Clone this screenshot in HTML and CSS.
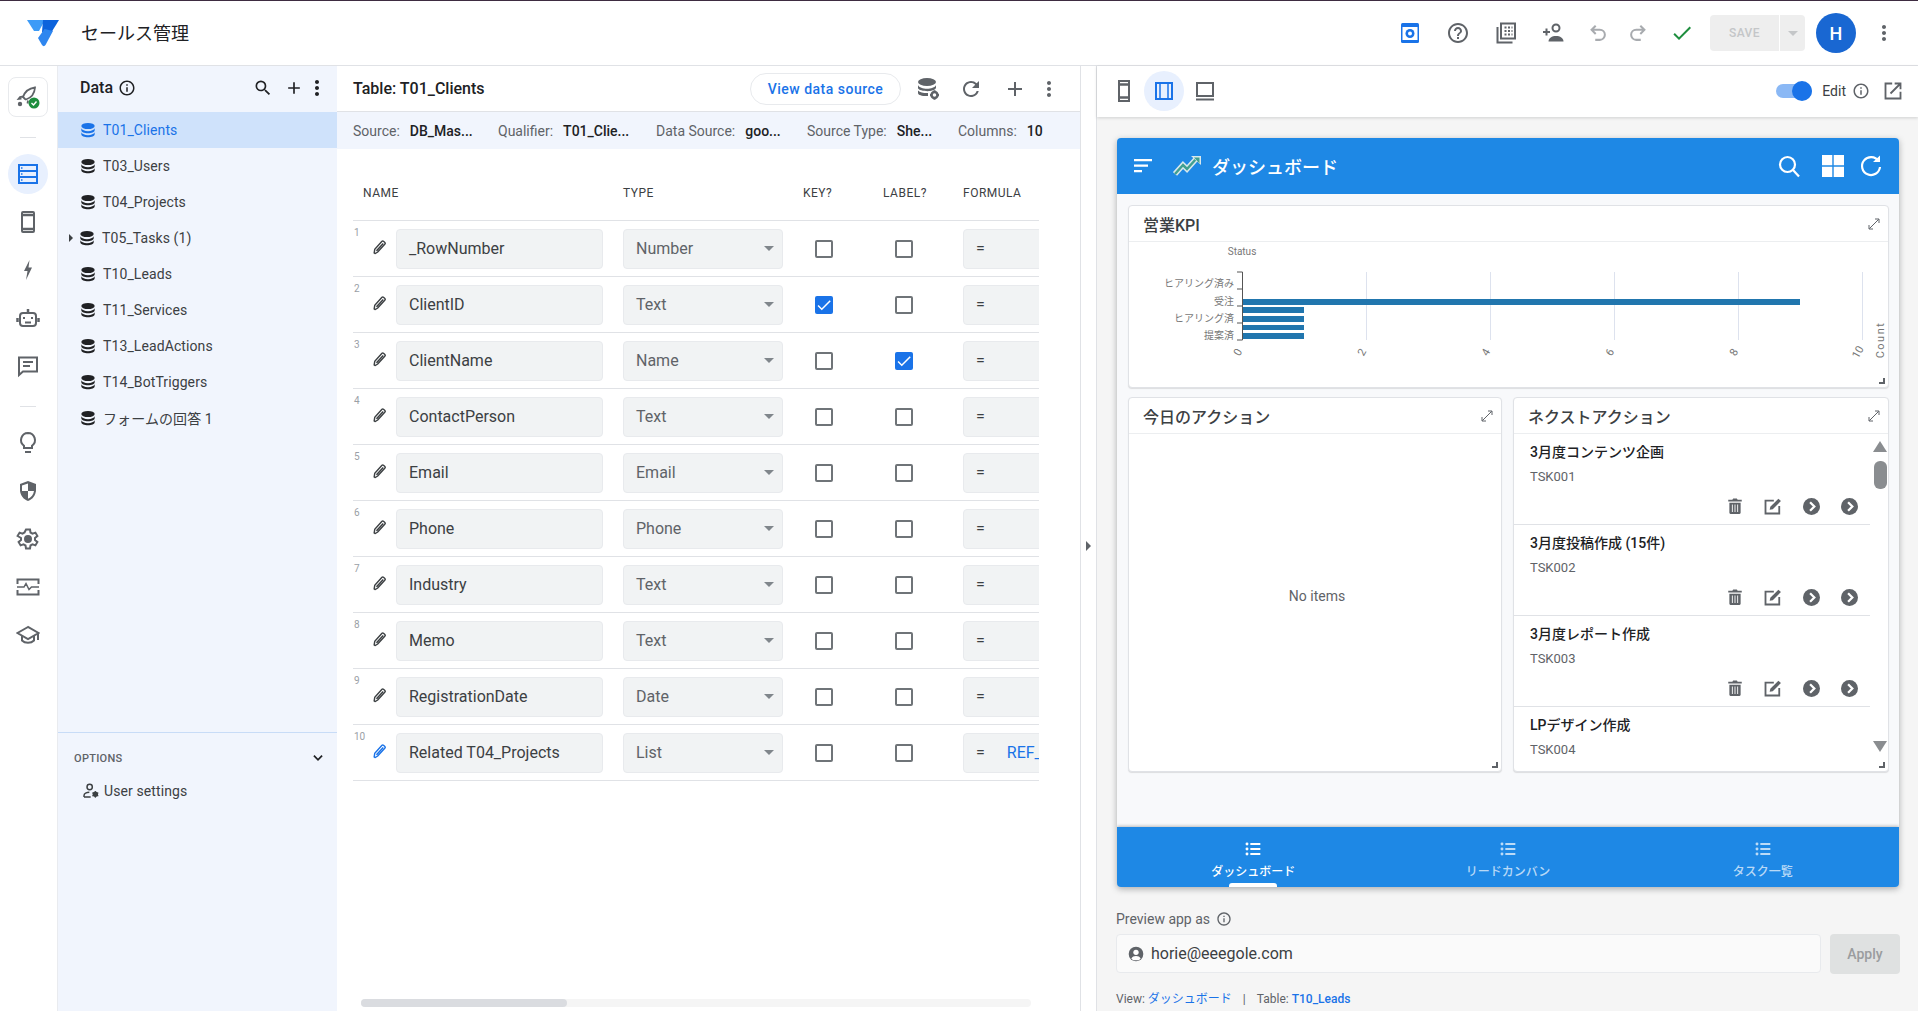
FILE: index.html
```html
<!DOCTYPE html>
<html lang="ja">
<head>
  <meta charset="UTF-8" />
  <title>セールス管理</title>
  <link rel="stylesheet" href="styles.css">
</head>
<body>

<svg class="sprite" width="0" height="0">
  <symbol id="i-db" viewBox="0 0 24 24"><ellipse cx="12" cy="6" rx="10" ry="4.6"/><path d="M2 9.500c1 2.700 5 4.300 10 4.300s9-1.600 10-4.300v2.800c0 2.600-4.500 4.600-10 4.600S2 14.900 2 12.300z"/><path d="M2 15.500c1 2.700 5 4.300 10 4.300s9-1.600 10-4.300v3c0 2.600-4.500 4.500-10 4.500S2 21.100 2 18.500z"/></symbol>
  <symbol id="i-search" viewBox="0 0 24 24"><path d="M15.500 14h-.79l-.28-.27A6.471 6.471 0 0 0 16 9.500 6.500 6.500 0 1 0 9.500 16c1.610 0 3.090-.59 4.230-1.570l.27.28v.79l5 4.990L20.490 19l-4.990-5zm-6 0C7.010 14 5 11.990 5 9.500S7.010 5 9.500 5 14 7.010 14 9.500 11.990 14 9.500 14z"/></symbol>
  <symbol id="i-add" viewBox="0 0 24 24"><path d="M19 13h-6v6h-2v-6H5v-2h6V5h2v6h6v2z"/></symbol>
  <symbol id="i-more" viewBox="0 0 24 24"><path d="M12 8c1.100 0 2-.9 2-2s-.9-2-2-2-2 .9-2 2 .9 2 2 2zm0 2c-1.100 0-2 .9-2 2s.9 2 2 2 2-.9 2-2-.9-2-2-2zm0 6c-1.100 0-2 .9-2 2s.9 2 2 2 2-.9 2-2-.9-2-2-2z"/></symbol>
  <symbol id="i-info" viewBox="0 0 24 24"><path d="M11 7h2v2h-2zm0 4h2v6h-2zm1-9C6.480 2 2 6.480 2 12s4.480 10 10 10 10-4.480 10-10S17.520 2 12 2zm0 18c-4.410 0-8-3.590-8-8s3.590-8 8-8 8 3.590 8 8-3.590 8-8 8z"/></symbol>
  <symbol id="i-help" viewBox="0 0 24 24"><path d="M11 18h2v-2h-2v2zm1-16C6.480 2 2 6.480 2 12s4.480 10 10 10 10-4.480 10-10S17.520 2 12 2zm0 18c-4.410 0-8-3.590-8-8s3.590-8 8-8 8 3.590 8 8-3.590 8-8 8zm0-14c-2.210 0-4 1.790-4 4h2c0-1.100.9-2 2-2s2 .9 2 2c0 2-3 1.750-3 5h2c0-2.250 3-2.500 3-5 0-2.210-1.790-4-4-4z"/></symbol>
  <symbol id="i-refresh" viewBox="0 0 24 24"><path d="M17.650 6.350A7.958 7.958 0 0 0 12 4c-4.420 0-7.990 3.580-7.990 8s3.570 8 7.990 8c3.730 0 6.840-2.550 7.730-6h-2.080A5.990 5.990 0 0 1 12 18c-3.310 0-6-2.690-6-6s2.690-6 6-6c1.660 0 3.140.69 4.220 1.780L13 11h7V4l-2.350 2.350z"/></symbol>
  <symbol id="i-pencil" viewBox="0 0 24 24"><path d="M6 20.500l-1.500-.9.800-5.100L15.500 3.300a1.500 1.500 0 0 1 2.100-.1l2 1.800a1.500 1.500 0 0 1 .1 2.100L9.500 18.400z" fill="#fff" stroke="currentColor" stroke-width="2"/><path d="M7 16l9.500-10.500 1.500 1.400L8.500 17.500z" fill="currentColor"/></symbol>
  <symbol id="i-check" viewBox="0 0 24 24"><path d="M9 16.170 4.830 12l-1.420 1.410L9 19 21 7l-1.410-1.410z"/></symbol>
  <symbol id="i-trash" viewBox="0 0 24 24"><path d="M4.500 7.500h15V21a1.500 1.500 0 0 1-1.500 1.500H6A1.500 1.500 0 0 1 4.500 21zM3 3.500h5.500l1-1.500h5l1 1.500H21v2.500H3z"/><path d="M8.500 10v10M12 10v10M15.500 10v10" stroke="#fff" stroke-width="1.200"/></symbol>
  <symbol id="i-note" viewBox="0 0 24 24"><path d="M19.500 12v9H3V5.500h10" fill="none" stroke="currentColor" stroke-width="2.200"/><path d="M8 16.500l.8-3.500L18.500 3.300l3 2.700-9.800 9.800z"/></symbol>
  <symbol id="i-go" viewBox="0 0 24 24"><circle cx="12" cy="12" r="12"/><path d="M10 6l6 6-6 6" fill="none" stroke="#fff" stroke-width="3.200"/></symbol>
  <symbol id="i-list" viewBox="0 0 24 24"><circle cx="3" cy="4.500" r="2.200"/><circle cx="3" cy="12" r="2.200"/><circle cx="3" cy="19.500" r="2.200"/><path d="M8 3h15v3H8zM8 10.500h15v3H8zM8 18h15v3H8z"/></symbol>
  <symbol id="i-expand" viewBox="0 0 24 24"><path d="M5 19 19 5M13.500 4.500H19.500V10.500M4.500 13.500V19.500H10.500" fill="none" stroke="currentColor" stroke-width="1.500"/></symbol>
</svg>

<header class="topbar">
  <svg class="logo" width="32" height="28" viewBox="0 0 32 28">
    <path d="M0 1h18l-6 11H7z" fill="#3d9bf7"/>
    <path d="M16 1h16l-8 13-9-1z" fill="#0b62dc"/>
    <path d="M11 19l6.500-9 8.500 2-7.500 14c-1 1.500-2.500 1.500-3.500 0z" fill="#2e86ef"/>
  </svg>
  <div class="app-name">セールス管理</div>
  <div class="top-actions">
    <svg class="ti t-preview" width="18" height="20" viewBox="0 0 18 20"><rect width="18" height="20" rx="1.500" fill="#1a73e8"/><rect x="1.500" y="4" width="15" height="13" fill="#fff"/><circle cx="9" cy="10.500" r="4.500" fill="#1a73e8"/><circle cx="9" cy="10.500" r="2" fill="#fff"/></svg>
    <svg class="ti t-help" width="24" height="24"><use href="#i-help"/></svg>
    <svg class="ti t-copy" width="24" height="24" viewBox="0 0 24 24" fill="none" stroke="#5f6368" stroke-width="2"><path d="M3.500 6v15.500h15"/><rect x="7" y="2.500" width="14" height="15"/><path d="M10.500 6.500h2M14 6.500h2M17.500 6.500h1M10.500 10h2M14 10h2M17.500 10h1M10.500 13.500h2M14 13.500h2M17.500 13.500h1" stroke-width="1.800"/></svg>
    <svg class="ti t-person" width="24" height="24" viewBox="0 0 24 24" fill="none" stroke="#5f6368" stroke-width="2"><circle cx="14" cy="7" r="3.500"/><path d="M6.500 20.500c0-3.500 3.500-5.500 7.500-5.500s7.500 2 7.500 5.500z" fill="#5f6368" stroke="none"/><path d="M1 11h7M4.500 7.500v7"/></svg>
    <svg class="ti t-undo" width="22" height="22" viewBox="0 0 24 24" fill="none" stroke="#a8abaf" stroke-width="2.200"><path d="M9.500 4 5 8.500l4.500 4.500M5 8.500h9a5.500 5.500 0 0 1 0 11H9"/></svg>
    <svg class="ti t-redo" width="22" height="22" viewBox="0 0 24 24" fill="none" stroke="#a8abaf" stroke-width="2.200"><path d="M14.500 4 19 8.500 14.500 13M19 8.500h-9a5.500 5.500 0 0 0 0 11h5"/></svg>
    <svg class="ti t-ok" width="24" height="24"><use href="#i-check"/></svg>
    <div class="save-btn"><span class="save-label">SAVE</span><span class="save-drop"><i class="caret"></i></span></div>
    <div class="avatar">H</div>
    <svg class="ti t-more" width="24" height="24"><use href="#i-more"/></svg>
  </div>
</header>

<div class="workspace">

  <nav class="rail">
    <div class="rail-deploy">
      <svg width="24" height="24" viewBox="0 0 24 24" fill="none" stroke="#5f6368" stroke-width="1.800"><path d="M9 14l-2-2c1.500-4.500 5-8.500 12-9.500-.5 7-4.500 10.500-9 12z"/><path d="M7.500 11.500 4 12l-1.500 2 3-.3M12 15.500l-.5 3"/><circle cx="4" cy="19" r="2.200" fill="#5f6368" stroke="none"/><circle cx="18" cy="18" r="5.500" fill="#1e8e3e" stroke="none"/><path d="M15.500 18l2 2 3-3.500" stroke="#fff" stroke-width="1.400"/></svg>
    </div>
    <div class="rail-sep"></div>
    <div class="rail-active">
      <svg width="24" height="24" viewBox="0 0 24 24" fill="none" stroke="#1a73e8" stroke-width="2"><rect x="3" y="3" width="18" height="18"/><path d="M3 9h18M3 15h18"/><path d="M5 6h1.500M5 12h1.500M5 18h1.500" stroke-width="1.300"/></svg>
    </div>
    <div class="rail-item"><svg width="24" height="24" viewBox="0 0 24 24" fill="none" stroke="#5f6368" stroke-width="2"><rect x="6" y="2" width="12" height="20" rx="1"/><path d="M6 5h12M6 19h12" stroke-width="2.500"/></svg></div>
    <div class="rail-item"><svg width="24" height="24" viewBox="0 0 24 24" fill="#5f6368"><path d="M13.500 2 8 13h3.500L10 22l6-12.500h-3.500z"/></svg></div>
    <div class="rail-item"><svg width="24" height="24" viewBox="0 0 24 24" fill="none" stroke="#5f6368" stroke-width="2"><rect x="4" y="7" width="16" height="13" rx="3"/><path d="M12 3v4M1.500 12v4M22.500 12v4" stroke-width="2.500"/><path d="M8 11v2M16 11v2M9 16.500h6"/></svg></div>
    <div class="rail-item"><svg width="24" height="24" viewBox="0 0 24 24" fill="none" stroke="#5f6368" stroke-width="2"><path d="M3 3.500h18v14H7l-4 3.500z"/><path d="M7 8h10M7 12h7"/></svg></div>
    <div class="rail-sep rail-sep-low"></div>
    <div class="rail-item"><svg width="24" height="24" viewBox="0 0 24 24" fill="none" stroke="#5f6368" stroke-width="2"><path d="M12 2a7 7 0 0 0-4 12.700V17h8v-2.300A7 7 0 0 0 12 2z"/><path d="M9 21h6"/></svg></div>
    <div class="rail-item"><svg width="24" height="24" viewBox="0 0 24 24"><path d="M12 2 4 5v6c0 5 3.400 9.500 8 11 4.600-1.500 8-6 8-11V5z" fill="#5f6368"/><path d="M12 4.500v7.500H6V6.500zM12 12h6c-.4 3.500-2.800 6.500-6 7.800z" fill="#fff"/></svg></div>
    <div class="rail-item"><svg width="24" height="24" viewBox="0 0 24 24" fill="none" stroke="#5f6368" stroke-width="2"><path d="M10 2.500h4l.5 3 2 1.100 2.900-1 2 3.400-2.400 2v2l2.400 2-2 3.400-2.900-1-2 1.100-.5 3h-4l-.5-3-2-1.100-2.900 1-2-3.400 2.400-2v-2L1.600 9l2-3.400 2.900 1 2-1.100z"/><circle cx="12" cy="12" r="3" fill="#5f6368"/></svg></div>
    <div class="rail-item"><svg width="24" height="24" viewBox="0 0 24 24" fill="none" stroke="#5f6368" stroke-width="2"><path d="M1.500 9V4.500h21V9M1.500 15v4.500h21V15"/><path d="M1 12h7l2-3.500 3 6 2.500-2.500H23" stroke-width="1.500"/></svg></div>
    <div class="rail-item"><svg width="24" height="24" viewBox="0 0 24 24" fill="none" stroke="#5f6368" stroke-width="2"><path d="M12 4 1.500 10 12 16l10.500-6z"/><path d="M6 13v4.500c3 3 9 3 12 0V13M22 10v7" /></svg></div>
  </nav>

  <aside class="data-panel">
    <div class="data-head">
      <span class="data-title">Data</span>
      <svg class="ic-info" width="18" height="18"><use href="#i-info"/></svg>
      <svg class="dh-search" width="20" height="20"><use href="#i-search"/></svg>
      <svg class="dh-add" width="20" height="20"><use href="#i-add"/></svg>
      <svg class="dh-more" width="24" height="24"><use href="#i-more"/></svg>
    </div>
    <ul class="table-list">
      <li class="selected"><svg width="16" height="16"><use href="#i-db"/></svg>T01_Clients</li>
      <li><svg width="16" height="16"><use href="#i-db"/></svg>T03_Users</li>
      <li><svg width="16" height="16"><use href="#i-db"/></svg>T04_Projects</li>
      <li class="has-child"><i class="tree-arrow"></i><svg width="16" height="16"><use href="#i-db"/></svg>T05_Tasks (1)</li>
      <li><svg width="16" height="16"><use href="#i-db"/></svg>T10_Leads</li>
      <li><svg width="16" height="16"><use href="#i-db"/></svg>T11_Services</li>
      <li><svg width="16" height="16"><use href="#i-db"/></svg>T13_LeadActions</li>
      <li><svg width="16" height="16"><use href="#i-db"/></svg>T14_BotTriggers</li>
      <li><svg width="16" height="16"><use href="#i-db"/></svg>フォームの回答 1</li>
    </ul>
    <div class="options">
      <div class="options-head">
        <span>OPTIONS</span>
        <svg width="14" height="14" viewBox="0 0 24 24" fill="none" stroke="#202124" stroke-width="3"><path d="M5 8l7 7 7-7"/></svg>
      </div>
      <div class="options-item">
        <svg width="16" height="16" viewBox="0 0 24 24" fill="none" stroke="#3c4043" stroke-width="2.200"><circle cx="10" cy="6" r="4"/><path d="M1.500 21v-2c0-3 4-5 8-5M1.500 21h10"/><circle cx="18.500" cy="17" r="3" fill="#3c4043"/><path d="M18.500 12v10M14 14.500l9 5M23 14.500l-9 5" stroke-width="1.600"/></svg>
        User settings
      </div>
    </div>
  </aside>

  <main class="table-pane">
    <div class="pane-head">
      <h2>Table: T01_Clients</h2>
      <button class="outline-btn">View data source</button>
      <svg class="ph-db" width="24" height="24" viewBox="0 0 24 24" fill="#5f6368"><ellipse cx="11" cy="5" rx="9" ry="4"/><path d="M2 8c1 2.500 5 3.800 9 3.800S19 10.500 20 8v3c-1 2-3 2.500-6 3-4 .5-12-.5-12-3zM2 13.500c2 2.200 6 2.600 10 2.500v3c-4 .4-10-.5-10-3z"/><circle cx="18.500" cy="18" r="3" fill="none" stroke="#5f6368" stroke-width="2.500"/><path d="M18.500 13.200v2M18.500 20.800v2M14 18h2M21 18h2" stroke="#5f6368" stroke-width="2"/></svg>
      <svg class="ph-refresh" width="24" height="24"><use href="#i-refresh"/></svg>
      <svg class="ph-add" width="24" height="24"><use href="#i-add"/></svg>
      <svg class="ph-more" width="24" height="24"><use href="#i-more"/></svg>
    </div>
    <div class="source-bar">
      <span class="src src-1"><em>Source:</em><b>DB_Mas...</b></span>
      <span class="src src-2"><em>Qualifier:</em><b>T01_Clie...</b></span>
      <span class="src src-3"><em>Data Source:</em><b>goo...</b></span>
      <span class="src src-4"><em>Source Type:</em><b>She...</b></span>
      <span class="src src-5"><em>Columns:</em><b>10</b></span>
    </div>

    <div class="cols">
      <div class="col-head">
        <span class="ch-name">NAME</span>
        <span>TYPE</span>
        <span class="ch-key">KEY?</span>
        <span class="ch-label">LABEL?</span>
        <span class="ch-formula">FORMULA</span>
      </div>

      <div class="col-row">
        <div class="col-idx"><small>1</small><svg width="17" height="17"><use href="#i-pencil"/></svg></div>
        <div class="field f-name">_RowNumber</div>
        <div class="field f-type">Number<i class="caret"></i></div>
        <div class="box-cell"><span class="box"></span></div>
        <div class="box-cell"><span class="box"></span></div>
        <div class="f-formula"><div class="field">=</div></div>
      </div>
      <div class="col-row">
        <div class="col-idx"><small>2</small><svg width="17" height="17"><use href="#i-pencil"/></svg></div>
        <div class="field f-name">ClientID</div>
        <div class="field f-type">Text<i class="caret"></i></div>
        <div class="box-cell"><span class="box on"><svg width="18" height="18"><use href="#i-check"/></svg></span></div>
        <div class="box-cell"><span class="box"></span></div>
        <div class="f-formula"><div class="field">=</div></div>
      </div>
      <div class="col-row">
        <div class="col-idx"><small>3</small><svg width="17" height="17"><use href="#i-pencil"/></svg></div>
        <div class="field f-name">ClientName</div>
        <div class="field f-type">Name<i class="caret"></i></div>
        <div class="box-cell"><span class="box"></span></div>
        <div class="box-cell"><span class="box on"><svg width="18" height="18"><use href="#i-check"/></svg></span></div>
        <div class="f-formula"><div class="field">=</div></div>
      </div>
      <div class="col-row">
        <div class="col-idx"><small>4</small><svg width="17" height="17"><use href="#i-pencil"/></svg></div>
        <div class="field f-name">ContactPerson</div>
        <div class="field f-type">Text<i class="caret"></i></div>
        <div class="box-cell"><span class="box"></span></div>
        <div class="box-cell"><span class="box"></span></div>
        <div class="f-formula"><div class="field">=</div></div>
      </div>
      <div class="col-row">
        <div class="col-idx"><small>5</small><svg width="17" height="17"><use href="#i-pencil"/></svg></div>
        <div class="field f-name">Email</div>
        <div class="field f-type">Email<i class="caret"></i></div>
        <div class="box-cell"><span class="box"></span></div>
        <div class="box-cell"><span class="box"></span></div>
        <div class="f-formula"><div class="field">=</div></div>
      </div>
      <div class="col-row">
        <div class="col-idx"><small>6</small><svg width="17" height="17"><use href="#i-pencil"/></svg></div>
        <div class="field f-name">Phone</div>
        <div class="field f-type">Phone<i class="caret"></i></div>
        <div class="box-cell"><span class="box"></span></div>
        <div class="box-cell"><span class="box"></span></div>
        <div class="f-formula"><div class="field">=</div></div>
      </div>
      <div class="col-row">
        <div class="col-idx"><small>7</small><svg width="17" height="17"><use href="#i-pencil"/></svg></div>
        <div class="field f-name">Industry</div>
        <div class="field f-type">Text<i class="caret"></i></div>
        <div class="box-cell"><span class="box"></span></div>
        <div class="box-cell"><span class="box"></span></div>
        <div class="f-formula"><div class="field">=</div></div>
      </div>
      <div class="col-row">
        <div class="col-idx"><small>8</small><svg width="17" height="17"><use href="#i-pencil"/></svg></div>
        <div class="field f-name">Memo</div>
        <div class="field f-type">Text<i class="caret"></i></div>
        <div class="box-cell"><span class="box"></span></div>
        <div class="box-cell"><span class="box"></span></div>
        <div class="f-formula"><div class="field">=</div></div>
      </div>
      <div class="col-row">
        <div class="col-idx"><small>9</small><svg width="17" height="17"><use href="#i-pencil"/></svg></div>
        <div class="field f-name">RegistrationDate</div>
        <div class="field f-type">Date<i class="caret"></i></div>
        <div class="box-cell"><span class="box"></span></div>
        <div class="box-cell"><span class="box"></span></div>
        <div class="f-formula"><div class="field">=</div></div>
      </div>
      <div class="col-row">
        <div class="col-idx idx-blue"><small>10</small><svg width="17" height="17"><use href="#i-pencil"/></svg></div>
        <div class="field f-name">Related T04_Projects</div>
        <div class="field f-type">List<i class="caret"></i></div>
        <div class="box-cell"><span class="box"></span></div>
        <div class="box-cell"><span class="box"></span></div>
        <div class="f-formula"><div class="field">=<span class="ref">REF_</span></div></div>
      </div>
    </div>

    <div class="h-scroll"><div class="h-thumb"></div></div>
  </main>

  <div class="gutter"><i class="gutter-arrow"></i></div>

  <section class="preview">
    <div class="preview-head">
      <svg class="ph-phone" width="24" height="24" viewBox="0 0 24 24" fill="none" stroke="#5f6368" stroke-width="2"><rect x="7" y="2" width="10" height="20"/><path d="M7 5.500h10M7 18.500h10" stroke-width="2.500"/></svg>
      <div class="view-active"><svg width="24" height="24" viewBox="0 0 24 24" fill="none" stroke="#1a73e8" stroke-width="2"><rect x="4" y="4" width="16" height="16"/><path d="M8 4v16" stroke-width="1.500"/><path d="M16 4v16" stroke-width="1.500"/></svg></div>
      <svg class="ph-laptop" width="24" height="24" viewBox="0 0 24 24" fill="none" stroke="#5f6368" stroke-width="2"><rect x="4" y="4" width="16" height="13"/><path d="M3 20.500h18"/></svg>
      <div class="edit-toggle"><span class="track"><span class="thumb"></span></span></div>
      <span class="edit-label">Edit</span>
      <svg class="ic-info" width="18" height="18"><use href="#i-info"/></svg>
      <svg class="ph-open" width="20" height="20" viewBox="0 0 24 24" fill="none" stroke="#5f6368" stroke-width="2.200"><path d="M11 3H3v18h18v-8"/><path d="M9 15 21 3M14 3h7v7"/></svg>
    </div>

    <div class="preview-body">
      <div class="device">
        <div class="app-bar">
          <svg class="ab-menu" width="18" height="14" viewBox="0 0 18 14" fill="#fff"><path d="M0 0h18v2.200H0zM0 5.500h14v2.200H0zM0 11h8v2.200H0z"/></svg>
          <svg class="ab-logo" width="30" height="22" viewBox="0 0 30 22"><path d="M2 19 10 10l4 4 9-10" fill="none" stroke="#d8e8ec" stroke-width="5.500"/><path d="M2 19 10 10l4 4 9-10" fill="none" stroke="#3f9f90" stroke-width="2.500"/><path d="M18 1h10v9z" fill="#d8e8ec"/><path d="M21 2.500h5.500v6z" fill="#3f9f90"/></svg>
          <span class="ab-title">ダッシュボード</span>
          <svg class="ab-search" width="24" height="24" viewBox="0 0 24 24" fill="none" stroke="#fff" stroke-width="2.200"><circle cx="10.500" cy="10.500" r="7.500"/><path d="M16 16l6 6.500"/></svg>
          <svg class="ab-grid" width="22" height="22" viewBox="0 0 22 22" fill="#fff"><path d="M0 0h10.300v10.300H0zM11.700 0H22v10.300H11.700zM0 11.700h10.300V22H0zM11.700 11.700H22V22H11.700z"/></svg>
          <svg class="ab-refresh" width="24" height="24" viewBox="0 0 24 24" fill="none" stroke="#fff" stroke-width="2.200"><path d="M19.500 7A9 9 0 1 0 21 13"/><path d="M21 1.500V8h-7z" fill="#fff" stroke="none"/></svg>
        </div>

        <div class="dash">
          <div class="card card-wide">
            <div class="card-head"><span>営業KPI</span><svg width="16" height="16"><use href="#i-expand"/></svg></div>
            <svg class="chart" width="760" height="141" viewBox="0 0 760 141">
              <text x="113" y="13" class="ct-title" text-anchor="middle">Status</text>
              <path d="M237.500 30v68M361.500 30v68M485.500 30v68M609.500 30v68M733.500 30v68" stroke="#dde2ee" fill="none"/>
              <rect x="114" y="57" width="557" height="6" fill="#2176ae"/>
              <rect x="114" y="65" width="61" height="6" fill="#2176ae"/>
              <rect x="114" y="74" width="61" height="6" fill="#2176ae"/>
              <rect x="114" y="83" width="61" height="5" fill="#2176ae"/>
              <rect x="114" y="91" width="61" height="6" fill="#2176ae"/>
              <path d="M113.500 30v68M108 30h5.500M108 47h5.500M108 64h5.500M108 81h5.500M108 98h5.500" stroke="#555" fill="none"/>
              <g class="ct-label" text-anchor="end">
                <text x="105" y="45">ヒアリング済み</text>
                <text x="105" y="63">受注</text>
                <text x="105" y="80">ヒアリング済</text>
                <text x="105" y="97">提案済</text>
              </g>
              <g class="ct-label ct-ticks" text-anchor="middle">
                <text transform="translate(112 112) rotate(-60)">0</text>
                <text transform="translate(236 112) rotate(-60)">2</text>
                <text transform="translate(360 112) rotate(-60)">4</text>
                <text transform="translate(484 112) rotate(-60)">6</text>
                <text transform="translate(608 112) rotate(-60)">8</text>
                <text transform="translate(732 112) rotate(-60)">10</text>
              </g>
              <text class="ct-count" transform="translate(755 98) rotate(-90)" text-anchor="middle">Count</text>
            </svg>
            <i class="corner"></i>
          </div>

          <div class="card">
            <div class="card-head"><span>今日のアクション</span><svg width="16" height="16"><use href="#i-expand"/></svg></div>
            <div class="no-items">No items</div>
            <i class="corner"></i>
          </div>

          <div class="card">
            <div class="card-head"><span>ネクストアクション</span><svg width="16" height="16"><use href="#i-expand"/></svg></div>
            <div class="task-wrap">
              <div class="task-list">
                <div class="task">
                  <div class="task-title">3月度コンテンツ企画</div>
                  <div class="task-id">TSK001</div>
                  <div class="task-actions"><svg width="18" height="18"><use href="#i-trash"/></svg><svg width="20" height="20"><use href="#i-note"/></svg><svg width="17" height="17"><use href="#i-go"/></svg><svg width="17" height="17"><use href="#i-go"/></svg></div>
                </div>
                <div class="task">
                  <div class="task-title">3月度投稿作成 (15件)</div>
                  <div class="task-id">TSK002</div>
                  <div class="task-actions"><svg width="18" height="18"><use href="#i-trash"/></svg><svg width="20" height="20"><use href="#i-note"/></svg><svg width="17" height="17"><use href="#i-go"/></svg><svg width="17" height="17"><use href="#i-go"/></svg></div>
                </div>
                <div class="task">
                  <div class="task-title">3月度レポート作成</div>
                  <div class="task-id">TSK003</div>
                  <div class="task-actions"><svg width="18" height="18"><use href="#i-trash"/></svg><svg width="20" height="20"><use href="#i-note"/></svg><svg width="17" height="17"><use href="#i-go"/></svg><svg width="17" height="17"><use href="#i-go"/></svg></div>
                </div>
                <div class="task task-last">
                  <div class="task-title">LPデザイン作成</div>
                  <div class="task-id">TSK004</div>
                </div>
              </div>
              <div class="v-scroll">
                <i class="sc-up"></i>
                <i class="sc-thumb"></i>
                <i class="sc-down"></i>
              </div>
            </div>
            <i class="corner"></i>
          </div>
        </div>

        <div class="tabs">
          <div class="tab active"><svg width="18" height="16"><use href="#i-list"/></svg><span>ダッシュボード</span><i class="tab-mark"></i></div>
          <div class="tab"><svg width="18" height="16"><use href="#i-list"/></svg><span>リードカンバン</span></div>
          <div class="tab"><svg width="18" height="16"><use href="#i-list"/></svg><span>タスク一覧</span></div>
        </div>
      </div>

      <div class="preview-as">Preview app as <svg class="ic-info" width="16" height="16"><use href="#i-info"/></svg></div>
      <div class="as-row">
        <div class="as-input">
          <svg width="16" height="16" viewBox="0 0 24 24"><circle cx="12" cy="12" r="11" fill="#5f6368"/><circle cx="12" cy="9.500" r="4" fill="#fff"/><path d="M5 19c1-3 4-4 7-4s6 1 7 4l-3 2.500H8z" fill="#fff"/></svg>
          horie@eeegole.com
        </div>
        <div class="apply-btn">Apply</div>
      </div>
      <div class="view-info">View: <a>ダッシュボード</a><span class="pipe">|</span>Table: <a class="strong">T10_Leads</a></div>
    </div>
  </section>
</div>

</body>
</html>
```

FILE: styles.css
```css
:root {
  --blue: #1a73e8;
  --app-blue: #1e88e5;
  --grey: #5f6368;
  --text: #3c4043;
  --line: #e0e2e6;
  --panel: #f1f5fd;
}
* {
  box-sizing: border-box;
}
html, body {
  height: 100%;
}
body {
  margin: 0;
  overflow: hidden;
  font-family: Roboto, "Noto Sans CJK JP", sans-serif;
  font-size: 14px;
  color: var(--text);
  fill: var(--grey);
  background: #fff;
}
svg {
  display: block;
  flex: none;
}
.sprite {
  position: absolute;
}

/* top bar */
.topbar {
  height: 66px;
  display: flex;
  align-items: center;
  border-top: 1px solid #3e2c41;
  border-bottom: 1px solid var(--line);
  padding-left: 27px;
}
.app-name {
  margin: 0 0 2px 22px;
  font-size: 18px;
  color: #202124;
}
.top-actions {
  margin-left: auto;
  display: flex;
  align-items: center;
  height: 100%;
  padding-right: 22px;
}
.t-help { margin-left: 27px; }
.t-copy { margin-left: 24px; }
.t-person { margin-left: 24px; }
.t-undo { margin-left: 21px; }
.t-redo { margin-left: 18px; }
.t-ok { margin-left: 21px; fill: #1e8e3e; }
.save-btn {
  margin-left: 16px;
  width: 95px;
  height: 36px;
  border-radius: 4px;
  background: #eee;
  display: flex;
  align-items: center;
  font-size: 12px;
  font-weight: 500;
  color: #c4c6c8;
}
.save-label {
  width: 69px;
  text-align: center;
  letter-spacing: .4px;
}
.save-drop {
  flex: 1;
  height: 100%;
  border-left: 1px solid #fff;
  display: flex;
  align-items: center;
  justify-content: center;
}
.save-drop .caret {
  margin: 0;
  border-top-color: #c4c6c8;
}
.avatar {
  margin-left: 11px;
  width: 40px;
  height: 40px;
  border-radius: 50%;
  background: #1967d2;
  color: #fff;
  font-size: 18px;
  font-weight: 500;
  display: flex;
  align-items: center;
  justify-content: center;
}
.t-more { margin-left: 16px; }

.caret {
  display: block;
  margin-left: auto;
  width: 0;
  height: 0;
  border-left: 5px solid transparent;
  border-right: 5px solid transparent;
  border-top: 5px solid #80868b;
}

.workspace {
  display: flex;
  height: 945px;
}

/* left icon rail */
.rail {
  width: 58px;
  flex: none;
  border-right: 1px solid #e9ebef;
  display: flex;
  flex-direction: column;
  align-items: center;
  padding: 11px 1px 0 0;
}
.rail-deploy {
  width: 40px;
  height: 40px;
  border: 1px solid #e8eaed;
  border-radius: 8px;
  display: flex;
  align-items: center;
  justify-content: center;
}
.rail-sep {
  width: 16px;
  height: 1px;
  background: #e0e2e6;
  margin: 20px 0 16px;
}
.rail-active {
  width: 40px;
  height: 40px;
  border-radius: 50%;
  background: #e8f0fe;
  display: flex;
  align-items: center;
  justify-content: center;
}
.rail-item {
  margin-top: 8px;
  height: 40px;
  display: flex;
  align-items: center;
  justify-content: center;
}
.rail-sep-low {
  margin: 20px 0 16px;
}
.rail-sep-low + .rail-item {
  margin-top: 0;
}

/* data list */
.data-panel {
  width: 279px;
  flex: none;
  background: var(--panel);
  display: flex;
  flex-direction: column;
}
.data-head {
  height: 46px;
  display: flex;
  align-items: center;
  padding: 0 0 3px 22px;
}
.data-title {
  font-size: 16px;
  font-weight: 500;
  color: #202124;
}
.data-head .ic-info {
  margin-left: 5px;
  fill: #202124;
}
.dh-search { margin-left: 117px; fill: #202124; }
.dh-add { margin-left: 11px; fill: #202124; }
.dh-more { margin-left: 1px; fill: #202124; }
.table-list {
  list-style: none;
  margin: 0;
  padding: 0;
}
.table-list li {
  height: 36px;
  display: flex;
  align-items: center;
  gap: 7px;
  padding-left: 22px;
  letter-spacing: .1px;
  color: #3c4043;
  position: relative;
}
.table-list li svg {
  fill: #202124;
}
.table-list .selected {
  background: #cfe2fb;
  color: var(--blue);
}
.table-list .selected svg {
  fill: var(--blue);
}
.tree-arrow {
  position: absolute;
  left: 11px;
  border-top: 4px solid transparent;
  border-bottom: 4px solid transparent;
  border-left: 4px solid #3c4043;
}
.table-list .has-child {
  padding-left: 21px;
}
.options {
  margin-top: auto;
  height: 279px;
  border-top: 1px solid #c8dcf7;
}
.options-head {
  display: flex;
  justify-content: space-between;
  align-items: center;
  padding: 18px 12px 0 16px;
  font-size: 11px;
  font-weight: 500;
  letter-spacing: .3px;
  color: var(--grey);
}
.options-item {
  margin-top: 18px;
  padding-left: 25px;
  display: flex;
  align-items: center;
  gap: 5px;
  letter-spacing: .1px;
}

/* table editor */
.table-pane {
  width: 744px;
  flex: none;
  border-right: 1px solid var(--line);
  display: flex;
  flex-direction: column;
}
.pane-head {
  height: 46px;
  display: flex;
  align-items: center;
  padding-left: 16px;
  border-bottom: 1px solid var(--line);
}
.pane-head h2 {
  margin: 0;
  font-size: 16px;
  font-weight: 500;
  color: #202124;
}
.outline-btn {
  margin-left: auto;
  width: 151px;
  height: 32px;
  border: 1px solid #e8eaed;
  border-radius: 16px;
  background: #fff;
  color: var(--blue);
  font: 500 14px Roboto, sans-serif;
  letter-spacing: .5px;
}
.ph-db { margin-left: 15px; }
.ph-refresh { margin-left: 19px; }
.ph-add { margin-left: 20px; }
.ph-more { margin-left: 10px; margin-right: 19px; }
.source-bar {
  height: 37px;
  background: var(--panel);
  display: flex;
  align-items: center;
  padding-left: 16px;
  font-size: 14px;
}
.src em {
  font-style: normal;
  color: var(--grey);
  margin-right: 10px;
}
.src b {
  font-weight: 500;
  color: #202124;
}
.src-1 { width: 145px; }
.src-2 { width: 158px; }
.src-3 { width: 151px; }
.src-4 { width: 151px; }

.cols {
  margin-left: 16px;
  width: 686px;
  overflow: hidden;
}
.col-head,
.col-row {
  display: grid;
  grid-template-columns: 43px 227px 160px 81px 80px 95px;
  border-bottom: 1px solid var(--line);
}
.col-head {
  height: 72px;
  align-items: end;
  padding-bottom: 20px;
  font-size: 12px;
  letter-spacing: .5px;
  color: var(--text);
}
.ch-name {
  grid-column: span 2;
  padding-left: 10px;
}
.ch-key { padding-left: 20px; }
.ch-label { padding-left: 19px; }
.ch-formula { padding-left: 19px; }
.col-row {
  height: 56px;
  align-items: center;
}
.col-idx {
  align-self: stretch;
  color: var(--text);
  padding-left: 1px;
}
.col-idx small {
  display: block;
  padding-top: 6px;
  font-size: 10px;
  line-height: 12px;
  color: #9aa0a6;
}
.col-idx svg {
  margin: 0 0 0 17px;
}
.idx-blue svg {
  color: var(--blue);
}
.field {
  height: 40px;
  background: #f1f3f4;
  border: 1px solid #e8eaed;
  border-radius: 4px;
  padding: 0 13px 0 12px;
  display: flex;
  align-items: center;
  font-size: 16px;
  color: #3c4043;
}
.f-name {
  width: 207px;
}
.f-type {
  color: var(--grey);
  padding-right: 8px;
}
.box-cell {
  display: flex;
  justify-content: center;
}
.box {
  width: 18px;
  height: 18px;
  border: 2px solid #6f7478;
  border-radius: 2px;
}
.box.on {
  background: var(--blue);
  border: none;
}
.box.on svg {
  fill: #fff;
}
.f-formula {
  padding-left: 19px;
  overflow: hidden;
}
.f-formula .field {
  width: 110px;
}
.ref {
  margin-left: 22px;
  color: var(--blue);
}
.h-scroll {
  margin: auto 0 4px 24px;
  width: 670px;
  height: 8px;
  border-radius: 4px;
  background: #f5f5f5;
}
.h-thumb {
  width: 206px;
  height: 8px;
  border-radius: 4px;
  background: #dadce0;
}

.gutter {
  width: 15px;
  flex: none;
  display: flex;
  align-items: center;
  justify-content: center;
  padding-top: 15px;
}
.gutter-arrow {
  border-top: 5px solid transparent;
  border-bottom: 5px solid transparent;
  border-left: 5px solid var(--grey);
}

/* preview */
.preview {
  flex: 1;
  min-width: 0;
  border-left: 1px solid var(--line);
  display: flex;
  flex-direction: column;
  background: #f5f5f5;
}
.preview-head {
  height: 51px;
  background: #fff;
  display: flex;
  align-items: center;
  padding: 0 0 1px 15px;
  box-shadow: 0 1px 3px rgba(60, 64, 67, .2);
  position: relative;
}
.view-active {
  margin-left: 8px;
  width: 40px;
  height: 40px;
  border-radius: 50%;
  background: #e8f0fe;
  display: flex;
  align-items: center;
  justify-content: center;
}
.ph-laptop { margin-left: 9px; }
.edit-toggle {
  margin-left: auto;
}
.track {
  display: block;
  width: 36px;
  height: 14px;
  border-radius: 7px;
  background: #8ab8f5;
  position: relative;
}
.thumb {
  position: absolute;
  right: 0;
  top: -3px;
  width: 20px;
  height: 20px;
  border-radius: 50%;
  background: var(--blue);
}
.edit-label {
  margin-left: 10px;
  font-size: 14px;
  color: #3c4043;
}
.preview-head .ic-info {
  margin-left: 6px;
}
.ph-open {
  margin: 0 15px 0 13px;
}
.preview-body {
  padding: 21px 19px 0 20px;
}
.device {
  height: 749px;
  display: flex;
  flex-direction: column;
  background: #f8f9fb;
  border-radius: 4px;
  box-shadow: 0 2px 6px rgba(60, 64, 67, .4);
  overflow: hidden;
}
.app-bar {
  height: 56px;
  flex: none;
  background: var(--app-blue);
  display: flex;
  align-items: center;
  padding: 0 16px 1px 17px;
  color: #fff;
}
.ab-logo { margin-left: 21px; }
.ab-title {
  margin-left: 9px;
  font-size: 18px;
  font-weight: 500;
}
.ab-search { margin-left: auto; }
.ab-grid { margin-left: 21px; }
.ab-refresh { margin-left: 15px; }

.dash {
  flex: 1;
  min-height: 0;
  display: grid;
  grid-template-columns: 374px 1fr;
  grid-template-rows: 183px 375px;
  gap: 9px 11px;
  padding: 11px 10px 0 11px;
}
.card {
  position: relative;
  display: flex;
  flex-direction: column;
  background: #fff;
  border: 1px solid #e0e2e6;
  border-radius: 4px;
  box-shadow: 0 1px 1px rgba(60, 64, 67, .15);
  overflow: hidden;
}
.card-wide {
  grid-column: span 2;
}
.card-head {
  height: 36px;
  flex: none;
  display: flex;
  align-items: center;
  justify-content: space-between;
  padding: 0 6px 0 14px;
  border-bottom: 1px solid #eceef0;
  font-size: 16px;
  font-weight: 500;
  color: var(--text);
}
.card-head svg {
  color: var(--grey);
}
.corner {
  position: absolute;
  right: 3px;
  bottom: 3px;
  width: 6px;
  height: 6px;
  border-right: 2px solid var(--grey);
  border-bottom: 2px solid var(--grey);
}
.chart text {
  font-family: Roboto, "Noto Sans CJK JP", sans-serif;
  fill: #777;
  font-size: 10px;
}
.chart .ct-ticks text {
  font-size: 11px;
}
.chart .ct-count {
  letter-spacing: 1.500px;
  font-size: 11px;
}
.no-items {
  flex: 1;
  display: flex;
  align-items: center;
  justify-content: center;
  font-size: 14px;
  color: var(--grey);
  padding: 0 0 14px 4px;
}
.task-wrap {
  flex: 1;
  min-height: 0;
  display: flex;
  overflow: hidden;
}
.task-list {
  flex: 1;
  min-width: 0;
}
.task {
  height: 91px;
  padding: 8px 0 0 16px;
  border-bottom: 1px solid #e0e2e6;
}
.task-last {
  border-bottom: none;
}
.task-title {
  font-size: 14px;
  font-weight: 500;
  line-height: 20px;
  color: #202124;
}
.task-id {
  margin-top: 6px;
  font-size: 13px;
  line-height: 17px;
  color: var(--grey);
}
.task-actions {
  margin-top: 11px;
  display: grid;
  grid-template-columns: repeat(4, 38px);
  justify-content: end;
  justify-items: center;
  align-items: center;
  padding-right: 2px;
  color: var(--grey);
}
.v-scroll {
  width: 18px;
  flex: none;
  display: flex;
  flex-direction: column;
  align-items: center;
  padding: 7px 0 19px 2px;
}
.sc-up {
  border-left: 7px solid transparent;
  border-right: 7px solid transparent;
  border-bottom: 11px solid #8a8d90;
}
.sc-thumb {
  margin-top: 9px;
  width: 13px;
  height: 28px;
  border-radius: 6px;
  background: #8a8d90;
}
.sc-down {
  margin-top: auto;
  border-left: 7px solid transparent;
  border-right: 7px solid transparent;
  border-top: 11px solid #8a8d90;
}
.tabs {
  height: 60px;
  flex: none;
  background: var(--app-blue);
  display: grid;
  grid-template-columns: repeat(3, 1fr);
  padding: 0 9px;
  box-shadow: 0 -1px 3px rgba(0, 0, 0, .25);
}
.tab {
  position: relative;
  display: flex;
  flex-direction: column;
  align-items: center;
  padding-top: 14px;
  font-size: 12px;
  font-weight: 500;
  color: rgba(255, 255, 255, .7);
}
.tab svg {
  fill: rgba(255, 255, 255, .7);
}
.tab span {
  margin-top: 7px;
  line-height: 16px;
}
.tab.active {
  color: #fff;
}
.tab.active svg {
  fill: #fff;
}
.tab-mark {
  position: absolute;
  bottom: 0;
  width: 48px;
  height: 4px;
  border-radius: 3px 3px 0 0;
  background: #fff;
}
.preview-as {
  margin: 24px 0 0 -1px;
  display: flex;
  align-items: center;
  gap: 6px;
  font-size: 14px;
  line-height: 16px;
  color: var(--grey);
}
.as-row {
  margin: 7px -1px 0 -1px;
  display: flex;
  gap: 9px;
}
.as-input {
  flex: 1;
  height: 39px;
  background: #fafafa;
  border: 1px solid #e8eaed;
  border-radius: 4px;
  display: flex;
  align-items: center;
  gap: 7px;
  padding-left: 11px;
  font-size: 16px;
  color: #3c4043;
}
.apply-btn {
  width: 70px;
  height: 40px;
  border-radius: 4px;
  background: #dfe1e1;
  color: #9a9c9e;
  font-size: 14px;
  font-weight: 500;
  display: flex;
  align-items: center;
  justify-content: center;
}
.view-info {
  margin: 15px 0 0 -1px;
  font-size: 12px;
  color: var(--grey);
}
.view-info a {
  color: var(--blue);
}
.view-info .strong {
  font-weight: 500;
}
.pipe {
  margin: 0 11px;
}
```
